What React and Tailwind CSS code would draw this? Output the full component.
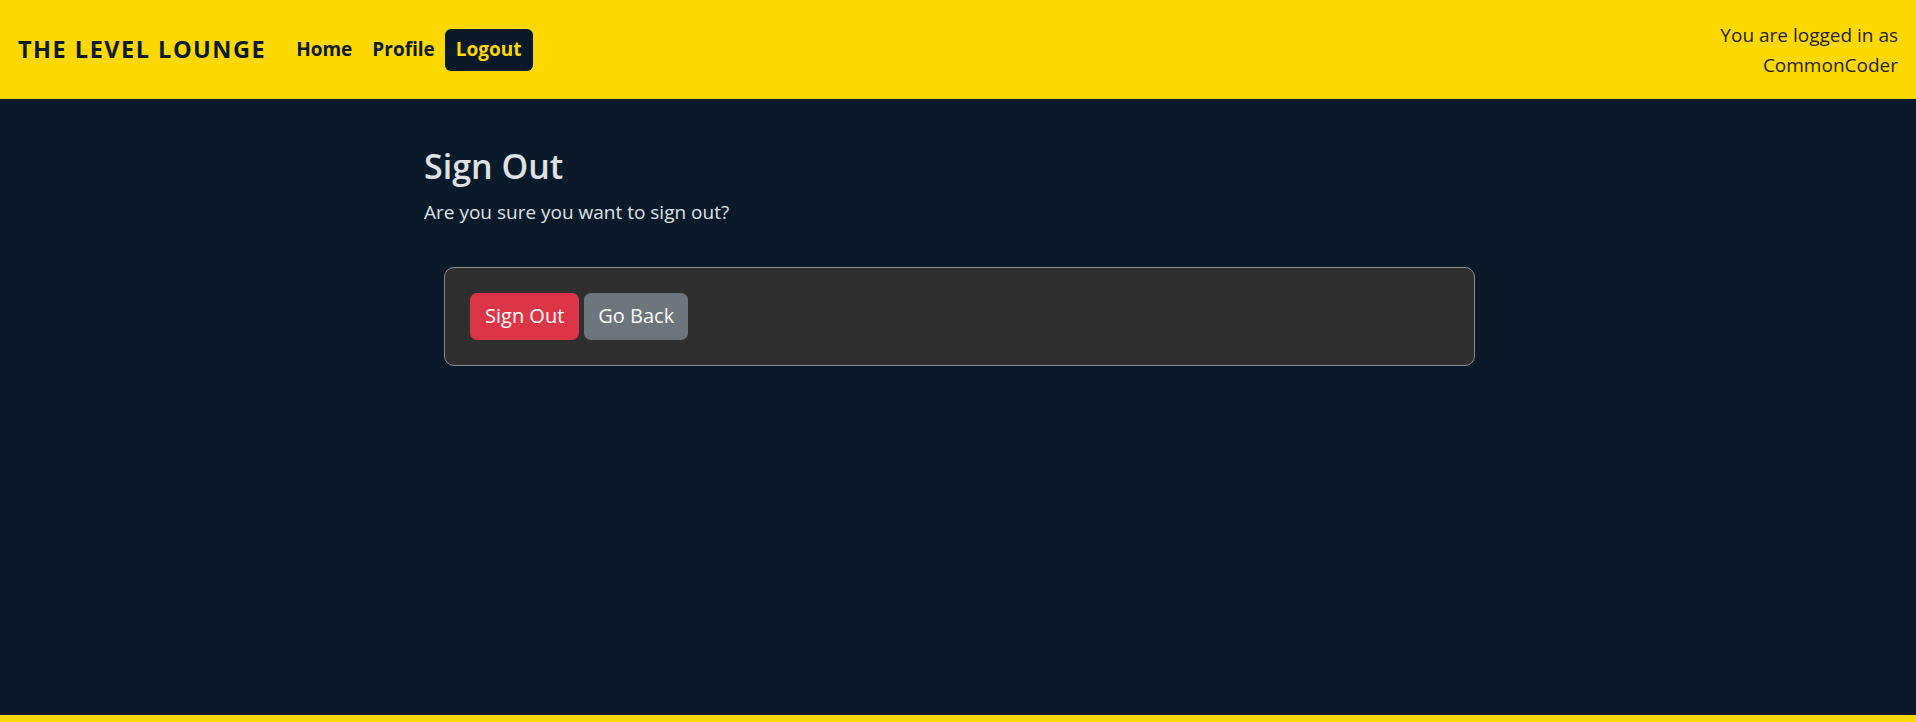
export default function App() {
  return (
    <div className="min-h-screen flex flex-col bg-[#0b1a2b] font-['Open_Sans',sans-serif]">
      {/* Top navbar */}
      <header className="h-[99px] shrink-0 bg-[#ffd800] flex items-center justify-between pl-[18px] pr-[18px] text-[#0b1a2b]">
        <div className="flex items-center">
          <span className="text-[23.5px] font-bold tracking-[1.5px] mr-[20px]">THE LEVEL LOUNGE</span>
          <nav className="flex items-center text-[19px] font-bold">
            <a className="px-[10px] py-[6px]">Home</a>
            <a className="px-[10px] py-[6px]">Profile</a>
            <a className="px-[11px] h-[42px] flex items-center rounded-[6px] bg-[#0b1a2b] text-[#ffd800]">
              Logout
            </a>
          </nav>
        </div>
        <div className="text-right text-[19px] leading-[30px] text-[#1f2328]">
          You are logged in as
          <br />
          CommonCoder
        </div>
      </header>

      <main className="flex-1">
        <div className="w-[1068px] mx-auto pt-[47px] text-[#dee2e6]">
          <h2 className="text-[34px] leading-[1.2] font-semibold mb-[10px]">Sign Out</h2>
          <p className="text-[19px] leading-[30px]">Are you sure you want to sign out?</p>

          <div className="mt-[40px] ml-[20px] mr-[17px] rounded-[10px] border border-[#8c8c8c] bg-[#2f2f2f] px-[25px] py-[25px]">
            <div className="flex gap-[5px]">
              <button className="h-[47px] px-[15px] rounded-[7px] bg-[#dc3545] text-white text-[20px]">
                Sign Out
              </button>
              <button className="h-[47px] px-[14px] rounded-[7px] bg-[#6c757d] text-white text-[20px]">
                Go Back
              </button>
            </div>
          </div>
        </div>
      </main>

      <footer className="h-[7px] shrink-0 bg-[#ffd800]" />
    </div>
  )
}
